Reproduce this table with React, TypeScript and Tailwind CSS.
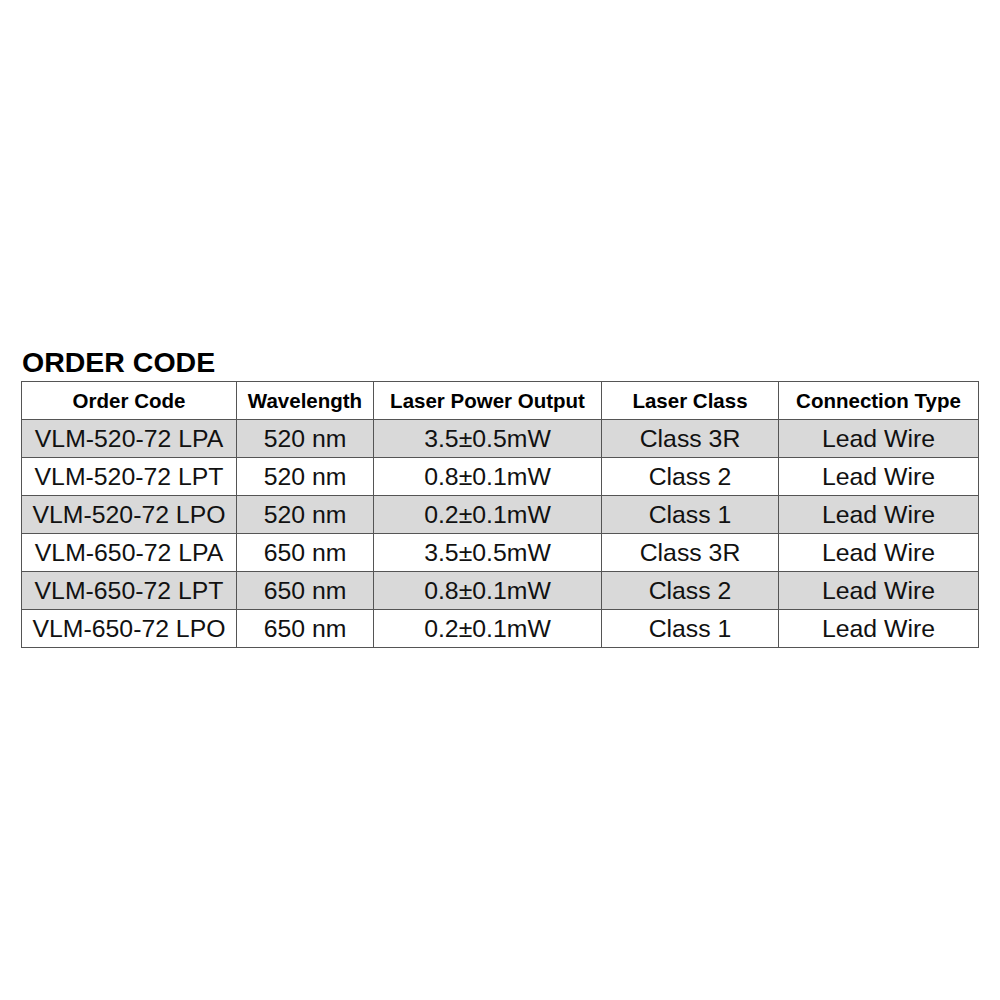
const rows = [
  ['VLM-520-72 LPA', '520 nm', '3.5±0.5mW', 'Class 3R', 'Lead Wire'],
  ['VLM-520-72 LPT', '520 nm', '0.8±0.1mW', 'Class 2', 'Lead Wire'],
  ['VLM-520-72 LPO', '520 nm', '0.2±0.1mW', 'Class 1', 'Lead Wire'],
  ['VLM-650-72 LPA', '650 nm', '3.5±0.5mW', 'Class 3R', 'Lead Wire'],
  ['VLM-650-72 LPT', '650 nm', '0.8±0.1mW', 'Class 2', 'Lead Wire'],
  ['VLM-650-72 LPO', '650 nm', '0.2±0.1mW', 'Class 1', 'Lead Wire'],
]

const headers = ['Order Code', 'Wavelength', 'Laser Power Output', 'Laser Class', 'Connection Type']
const widths = ['w-[215px]', 'w-[137px]', 'w-[228px]', 'w-[177px]', 'w-[200px]']

export default function App() {
  return (
    <div className="w-[1000px] h-[1000px] bg-white font-['Liberation_Sans',Arial,sans-serif] text-black pt-[346px] pl-[21px]">
      <h1 className="text-[28.5px] leading-[32px] font-bold pl-px">ORDER CODE</h1>
      <table className="mt-[3px] border-collapse table-fixed w-[958px]">
        <thead>
          <tr className="h-[38px]">
            {headers.map((h, i) => (
              <th key={h} className={`${widths[i]} border border-[#555] text-[20.5px] leading-none font-bold text-center p-0 pt-[2px]`}>
                {h}
              </th>
            ))}
          </tr>
        </thead>
        <tbody>
          {rows.map((r, ri) => (
            <tr key={r[0]} className={`h-[38px] ${ri % 2 === 0 ? 'bg-[#d9d9d9]' : 'bg-white'}`}>
              {r.map((c, ci) => (
                <td key={ci} className="border border-[#555] text-[24.8px] leading-none text-center p-0 pt-[2px] text-[#111]">
                  {c}
                </td>
              ))}
            </tr>
          ))}
        </tbody>
      </table>
    </div>
  )
}
